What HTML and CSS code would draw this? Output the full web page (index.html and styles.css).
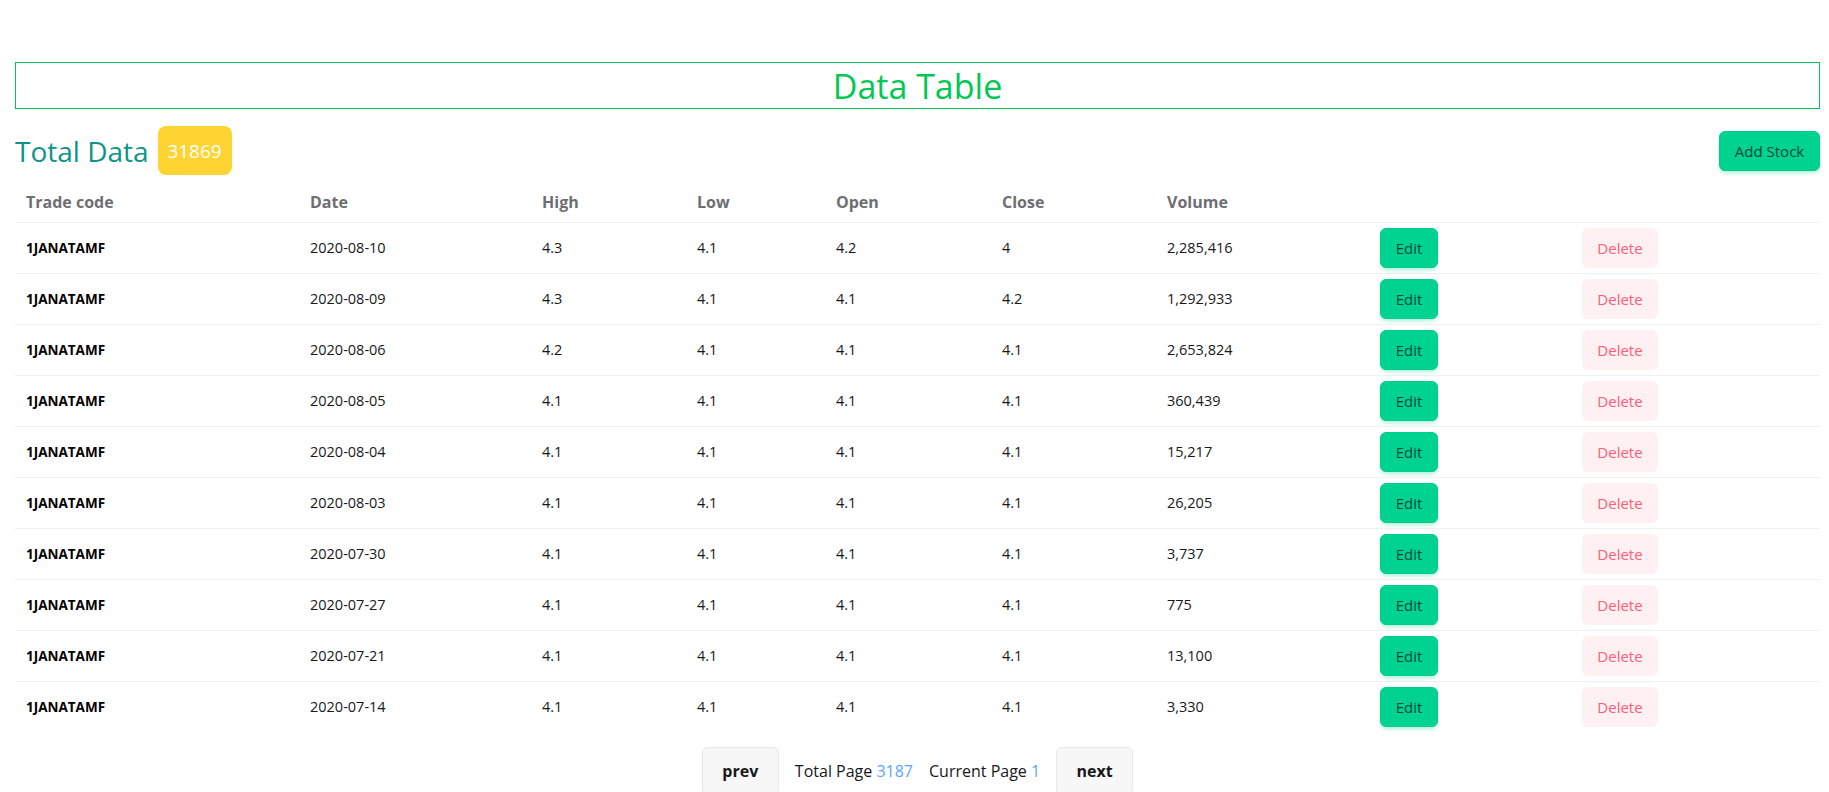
FILE: index.html
```html
<!DOCTYPE html>
<html lang="en">
<head>
<meta charset="utf-8">
<title>Data Table</title>
<link rel="stylesheet" href="styles.css">
</head>
<body>
<div class="page">
  <h1 class="title">Data Table</h1>
  <div class="summary">
    <div class="summary-left">
      <h2 class="total">Total Data</h2>
      <span class="count">31869</span>
    </div>
    <button class="btn btn-success">Add Stock</button>
  </div>
  <table class="data">
    <colgroup>
      <col class="c-code"><col class="c-date"><col class="c-high"><col class="c-low"><col class="c-open"><col class="c-close"><col class="c-vol"><col class="c-edit"><col class="c-del">
    </colgroup>
    <thead>
      <tr><th>Trade code</th><th>Date</th><th>High</th><th>Low</th><th>Open</th><th>Close</th><th>Volume</th><th></th><th></th></tr>
    </thead>
    <tbody>
      <tr><td class="code">1JANATAMF</td><td>2020-08-10</td><td>4.3</td><td>4.1</td><td>4.2</td><td>4</td><td>2,285,416</td><td><button class="btn btn-success">Edit</button></td><td><button class="btn btn-soft-error">Delete</button></td></tr>
      <tr><td class="code">1JANATAMF</td><td>2020-08-09</td><td>4.3</td><td>4.1</td><td>4.1</td><td>4.2</td><td>1,292,933</td><td><button class="btn btn-success">Edit</button></td><td><button class="btn btn-soft-error">Delete</button></td></tr>
      <tr><td class="code">1JANATAMF</td><td>2020-08-06</td><td>4.2</td><td>4.1</td><td>4.1</td><td>4.1</td><td>2,653,824</td><td><button class="btn btn-success">Edit</button></td><td><button class="btn btn-soft-error">Delete</button></td></tr>
      <tr><td class="code">1JANATAMF</td><td>2020-08-05</td><td>4.1</td><td>4.1</td><td>4.1</td><td>4.1</td><td>360,439</td><td><button class="btn btn-success">Edit</button></td><td><button class="btn btn-soft-error">Delete</button></td></tr>
      <tr><td class="code">1JANATAMF</td><td>2020-08-04</td><td>4.1</td><td>4.1</td><td>4.1</td><td>4.1</td><td>15,217</td><td><button class="btn btn-success">Edit</button></td><td><button class="btn btn-soft-error">Delete</button></td></tr>
      <tr><td class="code">1JANATAMF</td><td>2020-08-03</td><td>4.1</td><td>4.1</td><td>4.1</td><td>4.1</td><td>26,205</td><td><button class="btn btn-success">Edit</button></td><td><button class="btn btn-soft-error">Delete</button></td></tr>
      <tr><td class="code">1JANATAMF</td><td>2020-07-30</td><td>4.1</td><td>4.1</td><td>4.1</td><td>4.1</td><td>3,737</td><td><button class="btn btn-success">Edit</button></td><td><button class="btn btn-soft-error">Delete</button></td></tr>
      <tr><td class="code">1JANATAMF</td><td>2020-07-27</td><td>4.1</td><td>4.1</td><td>4.1</td><td>4.1</td><td>775</td><td><button class="btn btn-success">Edit</button></td><td><button class="btn btn-soft-error">Delete</button></td></tr>
      <tr><td class="code">1JANATAMF</td><td>2020-07-21</td><td>4.1</td><td>4.1</td><td>4.1</td><td>4.1</td><td>13,100</td><td><button class="btn btn-success">Edit</button></td><td><button class="btn btn-soft-error">Delete</button></td></tr>
      <tr><td class="code">1JANATAMF</td><td>2020-07-14</td><td>4.1</td><td>4.1</td><td>4.1</td><td>4.1</td><td>3,330</td><td><button class="btn btn-success">Edit</button></td><td><button class="btn btn-soft-error">Delete</button></td></tr>
    </tbody>
  </table>
  <div class="pager">
    <button class="btn btn-page">prev</button>
    <span class="pager-text">Total Page <span class="num">3187</span></span>
    <span class="pager-text">Current Page <span class="num">1</span></span>
    <button class="btn btn-page">next</button>
  </div>
</div>
</body>
</html>
```

FILE: styles.css
```css
* { box-sizing: border-box; }
html, body { margin: 0; background: #ffffff; }
body {
  font-family: "Open Sans", "Noto Sans", "Liberation Sans", sans-serif;
  color: #18181b;
}
.page {
  padding: 62px 9px 0 15px;
}
.title {
  margin: 0;
  padding-top: 2px;
  border: 1px solid #00c853;
  color: #00c853;
  text-align: center;
  font-size: 34px;
  font-weight: 400;
  line-height: 43px;
}
.summary {
  margin-top: 17px;
  height: 49px;
  display: flex;
  align-items: center;
  justify-content: space-between;
}
.summary-left {
  display: flex;
  align-items: center;
  gap: 9px;
}
.total {
  margin: 0;
  font-size: 28px;
  font-weight: 400;
  color: #0d9488;
  line-height: 40px;
}
.count {
  display: inline-flex;
  align-items: center;
  justify-content: center;
  width: 74px;
  height: 49px;
  background: #fdd431;
  color: #ffffff;
  border-radius: 8px;
  font-size: 19px;
}
.btn {
  font-family: inherit;
  border: 1px solid transparent;
  border-radius: 6px;
  height: 40px;
  padding: 0 16px;
  font-size: 15px;
  font-weight: 500;
  cursor: pointer;
}
.btn-success {
  background: #00d390;
  border-color: #00cc8b;
  color: #00473a;
  box-shadow: 0 3px 4px -1px rgba(0, 211, 144, 0.35);
}
.summary .btn-success {
  width: 101px;
  padding: 0;
}
.data td .btn-success {
  width: 58px;
  padding: 0;
}
.btn-soft-error {
  width: 76px;
  padding: 0;
  background: #fff0f2;
  border-color: #fff0f2;
  color: #ff5c78;
}
.data {
  margin-top: 7px;
  width: 100%;
  border-collapse: collapse;
  table-layout: fixed;
}
.c-code { width: 284px; }
.c-date { width: 232px; }
.c-high { width: 155px; }
.c-low { width: 139px; }
.c-open { width: 166px; }
.c-close { width: 165px; }
.c-vol { width: 213px; }
.c-edit { width: 202px; }
.c-del { width: auto; }
.data th {
  height: 40px;
  padding: 0 11px;
  text-align: left;
  font-size: 16px;
  font-weight: 700;
  color: #6e6e72;
  border-bottom: 1px solid #f0f0f1;
}
.data td {
  height: 51px;
  padding: 5px 11px;
  font-size: 14.5px;
  color: #18181b;
  border-bottom: 1px solid #f0f0f1;
}
.data tbody tr:last-child td { border-bottom: none; height: 50px; }
.data td.code { font-size: 13.5px; font-weight: 700; color: #000000; }
.pager {
  margin-top: 15px;
  display: flex;
  justify-content: center;
  align-items: center;
  gap: 16px;
}
.btn-page {
  height: 48px;
  width: 77px;
  padding: 0;
  background: #f7f7f7;
  border-color: #e8e8e8;
  color: #18181b;
  font-size: 16px;
  font-weight: 700;
  box-shadow: none;
}
.pager-text {
  font-size: 16px;
  color: #18181b;
}
.num { color: #60a5fa; }
```
